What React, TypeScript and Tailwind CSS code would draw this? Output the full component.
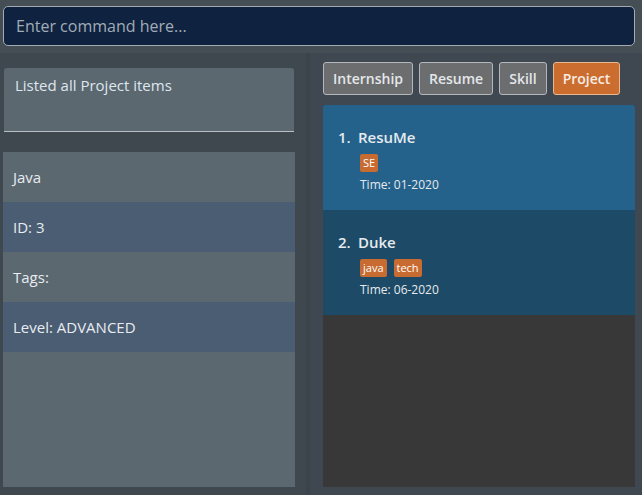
import React from "react";

const font = { fontFamily: '"Open Sans", "Noto Sans", sans-serif' };

function Tag({ label }: { label: string }) {
  return (
    <span className="rounded-[2px] bg-[#c86b30] px-[3px] text-[11px] leading-[18px] text-white">
      {label}
    </span>
  );
}

function ProjectCard({
  index,
  name,
  tags,
  time,
  selected,
}: {
  index: number;
  name: string;
  tags: string[];
  time: string;
  selected?: boolean;
}) {
  return (
    <div
      className={
        "h-[105px] px-[15px] pt-[21px] " +
        (selected ? "bg-[#24628c] rounded-t-[2px]" : "bg-[#1d4a66]")
      }
    >
      <div className="flex items-baseline text-[15px] font-semibold text-[#e6eaee]">
        <span className="w-[20px]">{index}.</span>
        <span>{name}</span>
      </div>
      <div className="mt-[5px] ml-[22px] flex gap-[7px]">
        {tags.map((t) => (
          <Tag key={t} label={t} />
        ))}
      </div>
      <div className="mt-[4px] ml-[22px] text-[12px] text-[#e6eaee]">Time: {time}</div>
    </div>
  );
}

export default function App() {
  const rows = [
    { text: "Java", bg: "bg-[#5b6870]" },
    { text: "ID: 3", bg: "bg-[#4b5d72]" },
    { text: "Tags:", bg: "bg-[#5b6870]" },
    { text: "Level: ADVANCED", bg: "bg-[#4b5d72]" },
  ];

  return (
    <div className="flex h-[495px] w-[642px] flex-col overflow-hidden bg-[#454d55]" style={font}>
      {/* Command box */}
      <div className="px-[3px] pt-[6px] pb-[7px] pr-[7px]">
        <div className="flex h-[40px] items-center rounded-[5px] border border-[#a4aab0] bg-[#0f2340] px-[12px] text-[16px] text-[#a2acb6]">
          Enter command here...
        </div>
      </div>

      <div className="flex flex-1">
        {/* Left column */}
        <div className="flex w-[306px] shrink-0 flex-col bg-[#40484f] pt-[15px] pb-[8px]">
          <div className="ml-[4px] h-[64px] w-[290px] rounded-t-[3px] border-b border-[#b8bec4] bg-[#5b6870] px-[11px] pt-[6px] text-[15px] text-[#dfe6ee]">
            Listed all Project items
          </div>
          <div className="mt-[20px] ml-[3px] flex w-[292px] flex-1 flex-col bg-[#5b6870]">
            {rows.map((r) => (
              <div
                key={r.text}
                className={"flex h-[50px] items-center px-[10px] text-[15px] text-[#e8ecf0] " + r.bg}
              >
                {r.text}
              </div>
            ))}
          </div>
        </div>

        <div className="w-[4px] shrink-0 bg-[#3c444b]" />

        {/* Right column */}
        <div className="flex min-w-0 flex-1 flex-col bg-[#3f4850] pt-[9px] pb-[8px] pl-[13px] pr-[7px]">
          <div className="flex gap-[6px]">
            {["Internship", "Resume", "Skill"].map((b) => (
              <button
                key={b}
                className="h-[33px] rounded-[3px] border border-[#b4b8bc] bg-[#6b6d6f] px-[9px] text-[14px] font-semibold text-[#e4e7ea]"
              >
                {b}
              </button>
            ))}
            <button className="h-[33px] rounded-[3px] border border-[#e8b890] bg-[#cc6d30] px-[9px] text-[14px] font-semibold text-[#f6ece4]">
              Project
            </button>
          </div>
          <div className="mt-[10px] flex flex-1 flex-col bg-[#383838]">
            <ProjectCard index={1} name="ResuMe" tags={["SE"]} time="01-2020" selected />
            <ProjectCard index={2} name="Duke" tags={["java", "tech"]} time="06-2020" />
          </div>
        </div>
      </div>
    </div>
  );
}
